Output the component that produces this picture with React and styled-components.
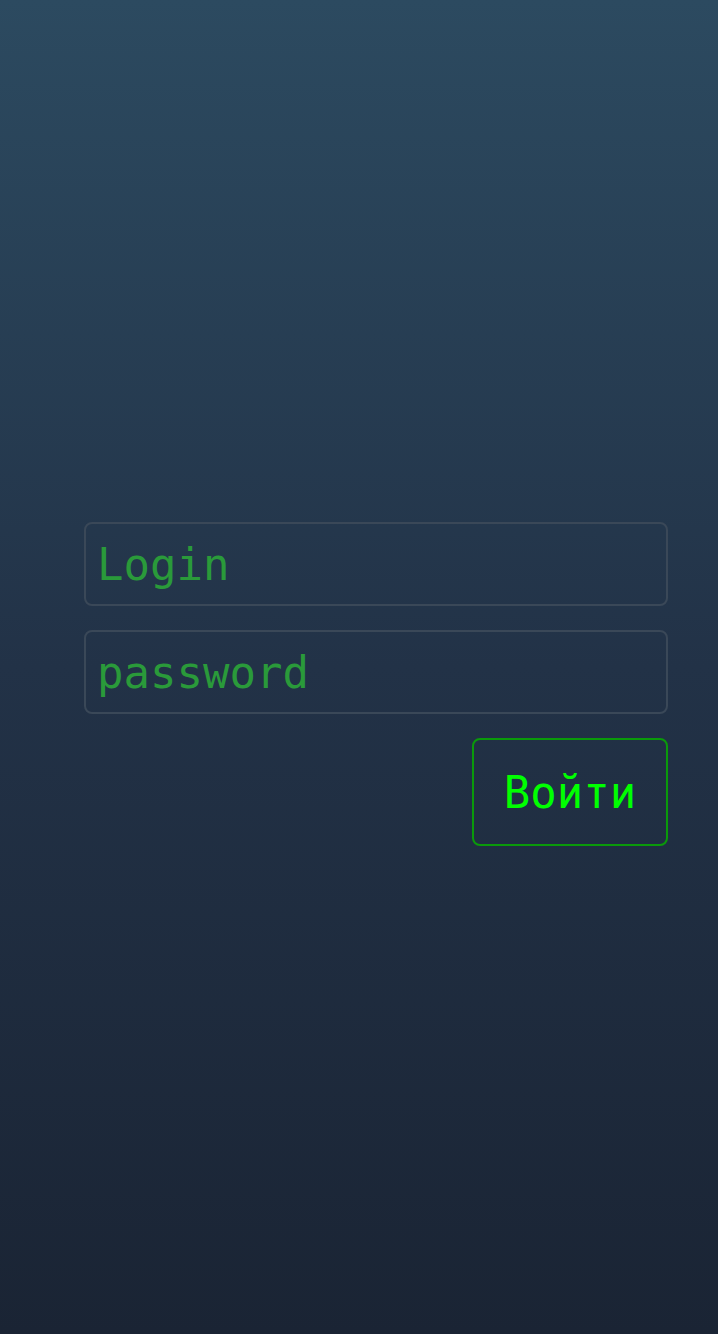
import React, { useState } from 'react';
import styled, { createGlobalStyle } from 'styled-components';

function App() {
  const [login, setLogin] = useState('');
  const [password, setPassword] = useState('');

  return (
    <>
      <GlobalStyle />
      <Page>
        <Form onSubmit={(e) => e.preventDefault()}>
          <Input
            placeholder="Login"
            value={login}
            onChange={(e) => setLogin(e.target.value)}
          />
          <Input
            type="text"
            placeholder="password"
            value={password}
            onChange={(e) => setPassword(e.target.value)}
          />
          <Actions>
            <Button type="submit">Войти</Button>
          </Actions>
        </Form>
      </Page>
    </>
  );
}

export default App;

const GlobalStyle = createGlobalStyle`
  html, body {
    margin: 0;
    padding: 0;
  }
  body {
    font-family: "DejaVu Sans Mono", monospace;
    background: #1a2535;
  }
`;
const Page = styled.div`
  min-height: 1334px;
  box-sizing: border-box;
  padding: 522px 50px 0 84px;
  background: linear-gradient(180deg, #2c4a60 0%, #223247 50%, #1a2434 100%);
`;
const Form = styled.form`
  display: flex;
  flex-direction: column;
  gap: 24px;
`;
const Input = styled.input`
  height: 84px;
  box-sizing: border-box;
  padding: 0 11px;
  border: 2px solid #3a4858;
  border-radius: 8px;
  background: transparent;
  color: #2a9a3a;
  font-family: "DejaVu Sans Mono", monospace;
  font-size: 44px;
  outline: none;

  &::placeholder {
    color: #2a9a3a;
  }
`;
const Actions = styled.div`
  display: flex;
  justify-content: flex-end;
`;
const Button = styled.button`
  width: 196px;
  height: 108px;
  border: 2px solid #0a9a0a;
  border-radius: 8px;
  background: transparent;
  color: #00ff00;
  font-family: "DejaVu Sans Mono", monospace;
  font-size: 44px;
  cursor: pointer;
`;
